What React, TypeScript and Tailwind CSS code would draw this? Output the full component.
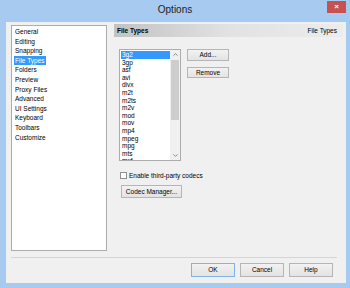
import { ChevronUp, ChevronDown } from 'lucide-react';

const sections = [
  'General', 'Editing', 'Snapping', 'File Types', 'Folders', 'Preview',
  'Proxy Files', 'Advanced', 'UI Settings', 'Keyboard', 'Toolbars', 'Customize',
];

const fileTypes = [
  '3g2', '3gp', 'asf', 'avi', 'divx', 'm2t', 'm2ts', 'm2v', 'mod', 'mov',
  'mp4', 'mpeg', 'mpg', 'mts', 'mxf',
];

function Btn({ label, className = '', isDefault = false }: { label: string; className?: string; isDefault?: boolean }) {
  return (
    <div
      className={`flex items-center justify-center border bg-gradient-to-b from-[#f2f2f2] to-[#e3e3e3] text-[6.5px] text-black ${
        isDefault ? 'border-[#7eb4ea]' : 'border-[#b5b5b5]'
      } ${className}`}
    >
      {label}
    </div>
  );
}

export default function App() {
  return (
    <div className="w-[350px] h-[288px] bg-[#a7caf0] flex flex-col font-['Liberation_Sans',Arial,sans-serif] overflow-hidden">
      {/* title bar */}
      <div className="h-[22px] grid grid-cols-[1fr_auto_1fr] items-start">
        <div />
        <span className="pt-[3px] text-[10px] leading-[14px] text-[#222]">Options</span>
        <div className="flex justify-end pr-[4px] pt-[1px]">
          <div className="w-[19px] h-[12px] bg-[#c75050] flex items-center justify-center text-white text-[8px] font-bold leading-none">
            ×
          </div>
        </div>
      </div>

      {/* body */}
      <div className="ml-[6px] mr-[4px] mb-[5px] flex-1 bg-[#f0f0f0] flex flex-col pt-[2px] pb-[6px]">
        <div className="h-[227px] flex pl-[5px] pr-[3px]">
          {/* section list */}
          <div className="mt-[1px] w-[96px] h-[226px] bg-white border border-[#acacac] pt-[1px] pl-[2px]">
            {sections.map((s) => (
              <div key={s} className="h-[9.6px] flex items-center">
                <span
                  className={`px-[1px] text-[6.5px] leading-[9.6px] ${
                    s === 'File Types' ? 'bg-[#3399ff] text-white' : 'text-black'
                  }`}
                >
                  {s}
                </span>
              </div>
            ))}
          </div>

          {/* right panel */}
          <div className="ml-[7px] flex-1 flex flex-col">
            <div className="h-[13px] bg-gradient-to-r from-[#c2c2c2] via-[#e2e2e2] to-[#ececec] flex items-center justify-between pl-[3px] pr-[6px] text-[6.5px] text-black">
              <span className="font-bold">File Types</span>
              <span>File Types</span>
            </div>

            <div className="mt-[12px] pl-[5px] flex gap-[6px]">
              {/* file type list */}
              <div className="w-[62px] h-[112px] bg-white border border-[#acacac] flex overflow-hidden">
                <div className="flex-1 pt-[1px] pl-[1px] overflow-hidden">
                  {fileTypes.map((f) => (
                    <div
                      key={f}
                      className={`h-[7.6px] leading-[7.6px] pl-[1px] text-[6.5px] ${
                        f === '3g2' ? 'bg-[#3399ff] text-white' : 'text-black'
                      }`}
                    >
                      {f}
                    </div>
                  ))}
                </div>
                <div className="w-[10px] bg-[#f0f0f0] flex flex-col items-center">
                  <div className="h-[9px] flex items-center justify-center">
                    <ChevronUp className="w-[7px] h-[7px] text-[#606060]" strokeWidth={2.5} />
                  </div>
                  <div className="w-[8px] mt-[1px] h-[60px] bg-[#cdcdcd]" />
                  <div className="flex-1" />
                  <div className="h-[9px] flex items-center justify-center">
                    <ChevronDown className="w-[7px] h-[7px] text-[#606060]" strokeWidth={2.5} />
                  </div>
                </div>
              </div>

              <div className="flex flex-col gap-[6px]">
                <Btn label="Add..." className="w-[42px] h-[12px]" />
                <Btn label="Remove" className="w-[42px] h-[11px]" />
              </div>
            </div>

            <div className="mt-[11px] pl-[6px] flex items-center gap-[2px]">
              <div className="w-[7px] h-[7px] bg-white border border-[#8f8f8f]" />
              <span className="text-[6.5px] leading-[7px] text-black">Enable third-party codecs</span>
            </div>

            <div className="mt-[6px] pl-[7px]">
              <Btn label="Codec Manager..." className="w-[61px] h-[13px]" />
            </div>
          </div>
        </div>

        {/* separator */}
        <div className="mt-[6px] ml-[5px] mr-[9px] h-[1px] bg-[#d5d5d5]" />

        {/* bottom buttons */}
        <div className="mt-[5px] pr-[13px] flex justify-end gap-[5px]">
          <Btn label="OK" className="w-[44px] h-[14px]" isDefault />
          <Btn label="Cancel" className="w-[44px] h-[14px]" />
          <Btn label="Help" className="w-[44px] h-[14px]" />
        </div>
      </div>
    </div>
  );
}
